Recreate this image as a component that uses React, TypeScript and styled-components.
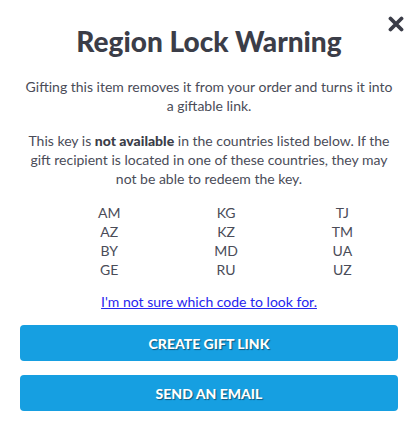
import styled, { createGlobalStyle } from 'styled-components';

const GlobalStyle = createGlobalStyle`
  html, body {
    margin: 0;
    padding: 0;
    background: #fff;
  }
  body {
    font-family: Lato, 'Noto Sans', sans-serif;
    color: #4a4c58;
  }
`;

const countries = [
  ['AM', 'AZ', 'BY', 'GE'],
  ['KG', 'KZ', 'MD', 'RU'],
  ['TJ', 'TM', 'UA', 'UZ'],
];

export default function App() {
  return (
    <>
      <GlobalStyle />
      <Modal>
        <CloseButton aria-label="Close">
          <svg width="16" height="16" viewBox="0 0 16 16">
            <path
              d="M2.5 2.5 L13.5 13.5 M13.5 2.5 L2.5 13.5"
              stroke="#3b3d48"
              strokeWidth="3.8"
              strokeLinecap="round"
            />
          </svg>
        </CloseButton>
        <Title>Region Lock Warning</Title>
        <Text>Gifting this item removes it from your order and turns it into a giftable link.</Text>
        <Text>
          This key is <strong>not available</strong> in the countries listed below. If the gift
          recipient is located in one of these countries, they may not be able to redeem the key.
        </Text>
        <CountryGrid>
          {countries.map((col, i) => (
            <Column key={i}>
              {col.map((c) => (
                <span key={c}>{c}</span>
              ))}
            </Column>
          ))}
        </CountryGrid>
        <HelpLink href="#">I'm not sure which code to look for.</HelpLink>
        <Actions>
          <ActionButton>Create Gift Link</ActionButton>
          <ActionButton>Send an Email</ActionButton>
        </Actions>
      </Modal>
    </>
  );
}

const Modal = styled.div`
  position: relative;
  width: 417px;
  height: 444px;
  box-sizing: border-box;
  padding: 23px 19px 0 20px;
  display: flex;
  flex-direction: column;
  align-items: center;
`;

const CloseButton = styled.button`
  position: absolute;
  top: 16px;
  right: 13px;
  border: 0;
  background: none;
  padding: 0;
  display: flex;
  cursor: pointer;
`;

const Title = styled.h1`
  margin: 0 0 18px;
  font-size: 28px;
  font-weight: 900;
  line-height: 36px;
  color: #3b3d48;
`;

const Text = styled.p`
  margin: 0 0 16px;
  padding: 0 4px;
  font-size: 14px;
  line-height: 19px;
  text-align: center;

  & + & {
    margin-bottom: 15px;
  }

  strong {
    font-weight: 900;
    color: #3b3d48;
  }
`;

const CountryGrid = styled.div`
  align-self: stretch;
  display: flex;
  justify-content: space-between;
  padding: 0 45px 0 78px;
  margin-bottom: 13px;
`;

const Column = styled.div`
  display: flex;
  flex-direction: column;
  align-items: center;
  font-size: 14px;
  line-height: 19px;
`;

const HelpLink = styled.a`
  font-size: 14px;
  line-height: 19px;
  color: #2626ee;
  text-decoration: underline;
  margin-bottom: 14px;
`;

const Actions = styled.div`
  align-self: stretch;
  display: flex;
  flex-direction: column;
  gap: 14px;
`;

const ActionButton = styled.button`
  height: 36px;
  border: 0;
  border-radius: 4px;
  background: #169fe1;
  color: #fff;
  font-family: Lato, sans-serif;
  font-size: 14px;
  font-weight: 900;
  text-transform: uppercase;
  text-shadow: 1px 1px 1px rgba(0, 0, 0, 0.45);
  cursor: pointer;
`;
